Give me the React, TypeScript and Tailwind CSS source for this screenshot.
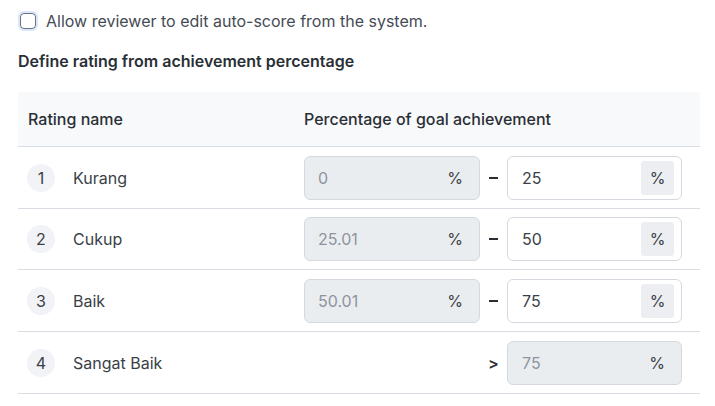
import React from "react";

const rows = [
  { n: 1, name: "Kurang", from: "0", to: "25", h: "h-[62px]" },
  { n: 2, name: "Cukup", from: "25.01", to: "50", h: "h-[61px]" },
  { n: 3, name: "Baik", from: "50.01", to: "75", h: "h-[62px]" },
  { n: 4, name: "Sangat Baik", from: null, to: "75", h: "h-[62px]" },
];

function DisabledInput({ value }: { value: string }) {
  return (
    <div className="flex h-[44px] w-[176px] items-center justify-between rounded-[6px] border border-[#d5d9df] bg-[#eaedf0] pl-[13px] pr-[16px]">
      <span className="text-[16px] text-[#8e949d]">{value}</span>
      <span className="text-[16px] text-[#3a3f47]">%</span>
    </div>
  );
}

function ActiveInput({ value }: { value: string }) {
  return (
    <div className="flex h-[44px] w-[175px] items-center justify-between rounded-[6px] border border-[#d5d9df] bg-white pl-[14px] pr-[7px]">
      <span className="text-[16px] text-[#3a3f47]">{value}</span>
      <span className="flex h-[34px] w-[33px] items-center justify-center rounded-[3px] bg-[#eceef1] text-[16px] text-[#3a3f47]">%</span>
    </div>
  );
}

export default function App() {
  return (
    <div className="h-[406px] w-[715px] bg-white font-['Inter',sans-serif] text-[#3a3f47]">
      <div className="pl-[18px] pr-[15px] pt-[9px]">
        <label className="flex h-[24px] items-center gap-[8px]">
          <span className="flex h-[20px] w-[20px] items-center justify-center rounded-[6px] bg-[#dbe7fb]">
            <span className="h-[16px] w-[16px] rounded-[4px] border-[1.5px] border-[#6b7380] bg-white" />
          </span>
          <span className="text-[16px] leading-[24px] text-[#454b54]">Allow reviewer to edit auto-score from the system.</span>
        </label>
        <div className="mt-[16px] text-[16px] font-semibold leading-[24px] text-[#2a2f36]">Define rating from achievement percentage</div>
        <div className="mt-[19px] w-[682px]">
          <div className="flex h-[55px] items-center border-b border-[#d8dce3] bg-[#f8f9fa] text-[16px] font-medium text-[#2a2f36]">
            <div className="w-[286px] pl-[10px]">Rating name</div>
            <div>Percentage of goal achievement</div>
          </div>
          {rows.map((r) => (
            <div key={r.n} className={`flex ${r.h} items-center border-b border-[#d8dce3]`}>
              <div className="flex w-[286px] items-center pl-[9px]">
                <span className="flex h-[28px] w-[28px] items-center justify-center rounded-full bg-[#f1f3f6] text-[16px] text-[#3a3f47]">{r.n}</span>
                <span className="ml-[18px] text-[16px] text-[#3a3f47]">{r.name}</span>
              </div>
              <div className="flex items-center">
                {r.from !== null ? (
                  <>
                    <DisabledInput value={r.from} />
                    <span className="flex w-[27px] justify-center">
                      <span className="h-[2px] w-[9px] bg-[#2a2f36]" />
                    </span>
                    <ActiveInput value={r.to} />
                  </>
                ) : (
                  <>
                    <span className="w-[176px]" />
                    <span className="flex w-[27px] justify-center text-[16px] font-semibold text-[#2a2f36]">&gt;</span>
                    <div className="flex h-[44px] w-[175px] items-center justify-between rounded-[6px] border border-[#d5d9df] bg-[#eaedf0] pl-[14px] pr-[16px]">
                      <span className="text-[16px] text-[#8e949d]">{r.to}</span>
                      <span className="text-[16px] text-[#3a3f47]">%</span>
                    </div>
                  </>
                )}
              </div>
            </div>
          ))}
        </div>
      </div>
    </div>
  );
}
